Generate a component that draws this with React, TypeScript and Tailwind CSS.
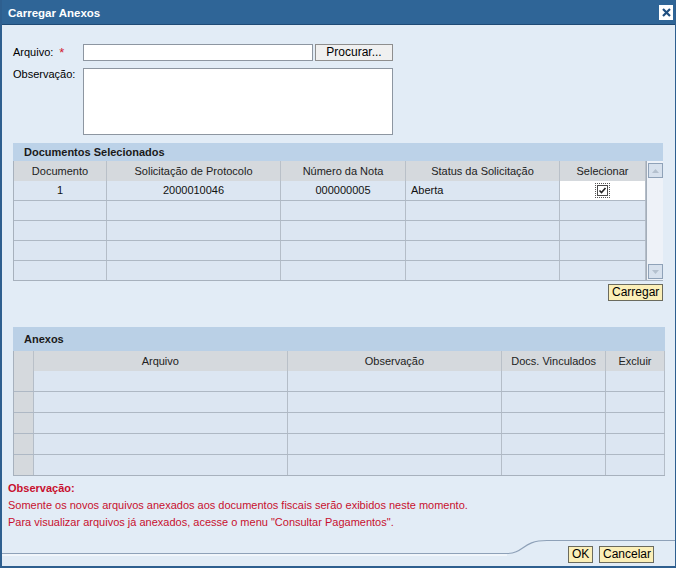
import React from 'react';

const docCols = ['w-[93px]', 'w-[174px]', 'w-[125px]', 'w-[154px]', 'w-[86px]'];
const anexCols = ['w-[20px]', 'w-[254px]', 'w-[215px]', 'w-[104px]', 'w-[59px]'];

const YellowButton = ({ label, className = '' }: { label: string; className?: string }) => (
    <button className={`h-[17px] px-[3px] bg-[#fbefb8] border border-[#6b6b5e] text-[12px] leading-[15px] text-black ${className}`}>
        {label}
    </button>
);

const Checkbox = () => (
    <span className="w-[15px] h-[15px] border border-dotted border-[#555] flex items-center justify-center">
        <span className="w-[11px] h-[11px] border border-[#4a4a4a] bg-white flex items-center justify-center">
            <svg width="9" height="9" viewBox="0 0 9 9">
                <path d="M1.5 4.5 L3.5 6.5 L7.5 2" fill="none" stroke="#222" strokeWidth="1.6" />
            </svg>
        </span>
    </span>
);

const ScrollArrow = ({ down }: { down?: boolean }) => (
    <span className="w-[15px] h-[15px] border border-[#8fa2b8] bg-[#d7e1ed] flex items-center justify-center">
        <svg width="7" height="4" viewBox="0 0 7 4">
            <path d={down ? 'M0 0 L7 0 L3.5 4 Z' : 'M0 4 L7 4 L3.5 0 Z'} fill="#b4c0ce" />
        </svg>
    </span>
);

const DocumentosTable = () => {
    const headers = ['Documento', 'Solicitação de Protocolo', 'Número da Nota', 'Status da Solicitação', 'Selecionar'];
    return (
        <div className="flex border-l border-b border-[#a7b1bd]">
            <div className="flex flex-col">
                <div className="flex h-[20px] bg-[#d5d9dd]">
                    {headers.map((h, i) => (
                        <div key={h} className={`${docCols[i]} border-r border-[#b9c0c8] flex items-center justify-center text-[#222]`}>{h}</div>
                    ))}
                </div>
                {[0, 1, 2, 3, 4].map((r) => (
                    <div key={r} className={`flex ${r === 4 ? 'h-[19px]' : 'h-[20px] border-b border-[#aeb8c4]'} bg-[#dce6f2]`}>
                        {docCols.map((w, i) => (
                            <div
                                key={i}
                                className={`${w} border-r border-[#b4bdc8] flex items-center ${i === 3 ? 'justify-start pl-[5px]' : 'justify-center'} ${r === 0 && i === 4 ? 'bg-white' : ''} text-[#111]`}
                            >
                                {r === 0 && i === 0 && '1'}
                                {r === 0 && i === 1 && '2000010046'}
                                {r === 0 && i === 2 && '000000005'}
                                {r === 0 && i === 3 && 'Aberta'}
                                {r === 0 && i === 4 && <Checkbox />}
                            </div>
                        ))}
                    </div>
                ))}
            </div>
            <div className="w-[18px] bg-[#eef2f8] border-l border-[#a3adb9] flex flex-col items-center justify-between pt-[2px] pb-[1px]">
                <ScrollArrow />
                <ScrollArrow down />
            </div>
        </div>
    );
};

const AnexosTable = () => {
    const headers = ['', 'Arquivo', 'Observação', 'Docs. Vinculados', 'Excluir'];
    return (
        <div className="flex flex-col border-l border-b border-[#a7b1bd]">
            <div className="flex h-[20px] bg-[#d5d9dd]">
                {headers.map((h, i) => (
                    <div key={i} className={`${anexCols[i]} border-r border-[#b9c0c8] flex items-center justify-center text-[#222]`}>{h}</div>
                ))}
            </div>
            {[0, 1, 2, 3, 4].map((r) => (
                <div key={r} className={`flex ${r === 4 ? 'h-[20px]' : 'h-[21px] border-b border-[#aeb8c4]'} bg-[#dce6f2]`}>
                    {anexCols.map((w, i) => (
                        <div key={i} className={`${w} border-r border-[#b4bdc8] ${i === 0 ? 'bg-[#d5d9dd]' : ''}`} />
                    ))}
                </div>
            ))}
        </div>
    );
};

export default function App() {
    return (
        <div className="w-[676px] h-[568px] flex flex-col bg-[#e2ecf6] border-l-2 border-r border-b-2 border-[#2e5f8f] font-['Liberation_Sans',Arial,sans-serif] text-[11px] text-black overflow-hidden">
            <header className="h-[25px] flex-shrink-0 flex items-center justify-between bg-[#2f6597] border-b border-[#1e4a75] pl-[6px] pr-[2px]">
                <span className="font-bold text-white text-[11.5px] pt-[4px]">Carregar Anexos</span>
                <span className="w-[14px] h-[15px] bg-white flex items-center justify-center">
                    <svg width="9" height="9" viewBox="0 0 9 9">
                        <path d="M1 1 L8 8 M8 1 L1 8" stroke="#1f4f80" strokeWidth="2.2" />
                    </svg>
                </span>
            </header>

            <div className="flex-1 flex flex-col pl-[11px] min-h-0">
                <div className="flex items-center h-[17px] mt-[19px]">
                    <span className="w-[70px] flex items-center">
                        Arquivo:<span className="text-[#d2202f] ml-[6px] text-[13px] leading-[11px]">*</span>
                    </span>
                    <input className="w-[230px] h-[17px] bg-white border border-[#8d96a1] outline-none" />
                    <button className="ml-[2px] w-[78px] h-[17px] bg-[#f0f0f0] border border-[#8e8e8e] text-[12px] leading-[15px]">Procurar...</button>
                </div>
                <div className="flex mt-[7px] h-[67px]">
                    <span className="w-[70px] leading-[12px]">Observação:</span>
                    <textarea className="w-[310px] h-[67px] bg-white border border-[#8d96a1] outline-none resize-none" />
                </div>

                <div className="w-[650px] mt-[8px] flex flex-col">
                    <div className="h-[18px] bg-[#bcd2e8] flex items-center pl-[11px] font-bold text-[#1a1a1a]">Documentos Selecionados</div>
                    <DocumentosTable />
                    <div className="flex justify-end mt-[3px]">
                        <YellowButton label="Carregar" className="w-[55px]" />
                    </div>
                </div>

                <div className="w-[652px] mt-[26px] flex flex-col">
                    <div className="h-[24px] bg-[#bad0e6] flex items-start pt-[4px] pl-[11px] font-bold text-[#1a1a1a]">Anexos</div>
                    <AnexosTable />
                </div>

                <div className="-ml-[5px] mt-[4px] flex flex-col text-[#c8102e] leading-[17px]">
                    <span className="font-bold">Observação:</span>
                    <span>Somente os novos arquivos anexados aos documentos fiscais serão exibidos neste momento.</span>
                    <span>Para visualizar arquivos já anexados, acesse o menu "Consultar Pagamentos".</span>
                </div>
            </div>

            <footer className="relative h-[34px] flex-shrink-0 flex items-start justify-end pr-[21px] pt-[14px]">
                <svg className="absolute left-0 top-0" width="674" height="34" viewBox="0 0 674 34">
                    <path d="M0 21.5 H505 C522 21.5 520 8.5 545 8.5 H674" fill="none" stroke="#8ea1b8" strokeWidth="1.2" />
                    <path d="M0 23 H505" fill="none" stroke="#ffffff" strokeWidth="1" />
                </svg>
                <div className="relative flex gap-[6px]">
                    <YellowButton label="OK" className="w-[25px]" />
                    <YellowButton label="Cancelar" className="w-[55px]" />
                </div>
            </footer>
        </div>
    );
}
